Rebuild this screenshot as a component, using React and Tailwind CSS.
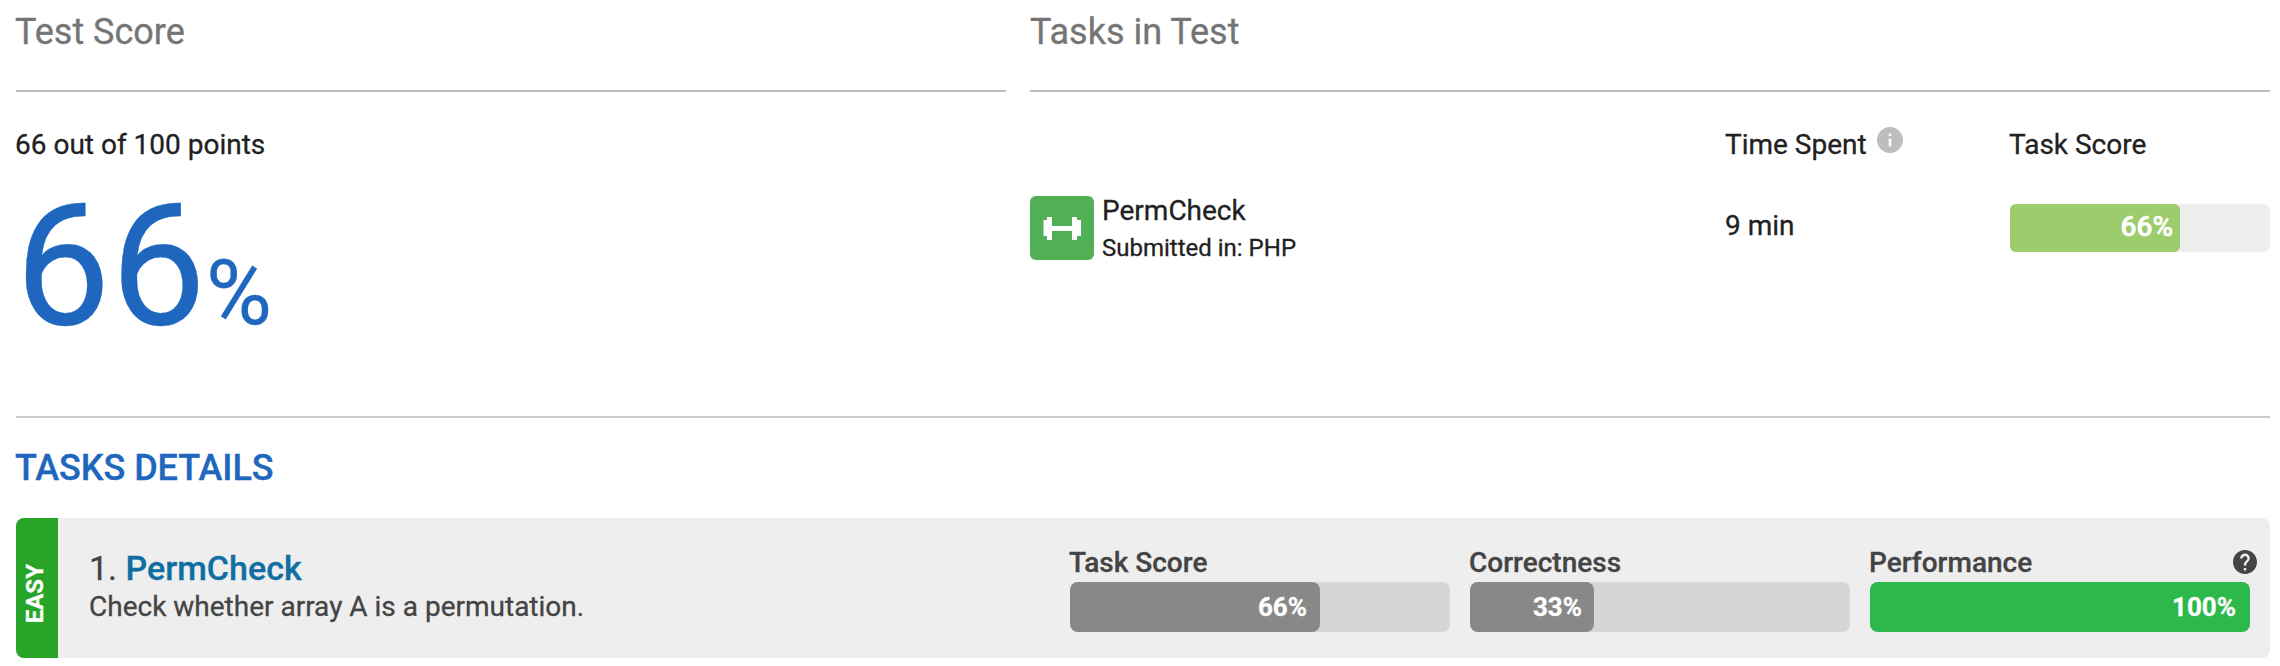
const metrics = [
  { label: "Task Score", value: 66, fill: 250, color: "bg-[#888888] pr-[13px]", text: "66%" },
  { label: "Correctness", value: 33, fill: 124, color: "bg-[#888888] pr-[12px]", text: "33%" },
  { label: "Performance", value: 100, fill: 380, color: "bg-[#2db84b] pr-[14px]", text: "100%", help: true },
];

function DumbbellIcon() {
  return (
    <svg width="64" height="64" viewBox="0 0 64 64" fill="#ffffff" aria-hidden="true">
      <path d="M17 21h5v9h20v-9h5v3h4v16h-4v4h-5v-9H22v9h-5v-4h-3.500V24H17z" />
    </svg>
  );
}

function InfoIcon() {
  return (
    <svg className="ml-[10px]" width="26" height="26" viewBox="2 2 20 20" fill="#bdbdbd" aria-hidden="true">
      <path d="M12 2C6.480 2 2 6.480 2 12s4.480 10 10 10 10-4.480 10-10S17.520 2 12 2zm1 15h-2v-6h2v6zm0-8h-2V7h2v2z" />
    </svg>
  );
}

function HelpIcon() {
  return (
    <svg className="-mr-[7px] mt-[7px]" width="24" height="24" viewBox="2 2 20 20" fill="#444444" aria-hidden="true">
      <path d="M12 2C6.480 2 2 6.480 2 12s4.480 10 10 10 10-4.480 10-10S17.520 2 12 2zm1 17h-2v-2h2v2zm2.070-7.750l-.9.920C13.450 12.900 13 13.500 13 15h-2v-.5c0-1.100.450-2.100 1.170-2.830l1.240-1.260c.370-.360.590-.860.590-1.410 0-1.100-.9-2-2-2s-2 .9-2 2H8c0-2.210 1.790-4 4-4s4 1.790 4 4c0 .880-.360 1.680-.930 2.250z" />
    </svg>
  );
}

function SectionTitle({ children }) {
  return (
    <h2 className="h-[92px] border-b-2 border-[#bdbdbd] pt-3 text-[36px] leading-[40px] text-[#757575]">
      {children}
    </h2>
  );
}

function Metric({ metric }) {
  return (
    <div className="w-[380px]">
      <div className="flex h-[39px] justify-between text-[28px] leading-[40px] font-medium text-[#444444]">
        <span className="-ml-px">{metric.label}</span>
        {metric.help && <HelpIcon />}
      </div>
      <div className="h-[50px] rounded-lg bg-[#d6d6d6]">
        <div
          className={`flex h-full items-center justify-end rounded-lg text-[26px] font-bold text-white ${metric.color}`}
          style={{ width: metric.fill }}
        >
          {metric.text}
        </div>
      </div>
    </div>
  );
}

export default function App() {
  return (
    <main className="h-[666px] w-[2280px] overflow-hidden bg-white pr-[10px] pl-4 font-[Roboto,sans-serif] text-[#212121] [-webkit-text-stroke:0.3px]">
      <div className="flex h-[416px] gap-6">
        <section className="w-[990px]">
          <SectionTitle><span className="-ml-px">Test Score</span></SectionTitle>
          <p className="mt-[35px] -ml-px text-[28px] leading-[36px]">66 out of 100 points</p>
          <div className="mt-[18px] -ml-px flex items-baseline text-[170px] leading-[170px] text-[#1e66be]">
            66<span className="text-[90px]">%</span>
          </div>
        </section>
        <section className="w-[1240px]">
          <SectionTitle>Tasks in Test</SectionTitle>
          <div className="grid grid-cols-[695px_285px_260px] pt-[35px] text-[28px] leading-[36px]">
            <span />
            <div className="flex">
              Time Spent
              <InfoIcon />
            </div>
            <div className="-ml-px">Task Score</div>
            <div className="mt-[33px] flex">
              <div className="size-16 rounded-md bg-[#51af55]">
                <DumbbellIcon />
              </div>
              <div className="ml-2">
                <div className="-mt-[3px]">PermCheck</div>
                <div className="mt-px text-[24px]">Submitted in: PHP</div>
              </div>
            </div>
            <div className="mt-[45px]">9 min</div>
            <div className="mt-[41px] h-[48px] rounded-md bg-[#eeeeee]">
              <div className="flex h-full w-[170px] items-center justify-end rounded-md bg-[#9ccc6b] pr-[7px] pb-[3px] font-medium text-white [-webkit-text-stroke:0.6px]">
                66%
              </div>
            </div>
          </div>
        </section>
      </div>
      <section className="border-t-2 border-[#cccccc]">
        <h2 className="mt-[30px] -ml-px text-[36px] leading-[40px] font-medium tracking-[-0.05px] text-[#1e66be]">TASKS DETAILS</h2>
        <div className="mt-[30px] flex h-[140px] overflow-hidden rounded-lg bg-[#eeeeee]">
          <div className="flex w-[42px] items-center justify-center bg-[#28a428] pt-[12px] pr-[4px]">
            <span className="rotate-180 text-[24px] leading-[30px] font-bold text-white [writing-mode:vertical-rl]">
              EASY
            </span>
          </div>
          <div className="ml-[31px] w-[981px] pt-[30px] text-[#444444]">
            <div className="text-[34px] leading-[40px]">
              1. <span className="font-medium text-[#106ea3]">PermCheck</span>
            </div>
            <div className="text-[28px] leading-[37px]">Check whether array A is a permutation.</div>
          </div>
          <div className="flex gap-5 pt-[25px]">
            {metrics.map((metric) => (
              <Metric key={metric.label} metric={metric} />
            ))}
          </div>
        </div>
      </section>
    </main>
  );
}
